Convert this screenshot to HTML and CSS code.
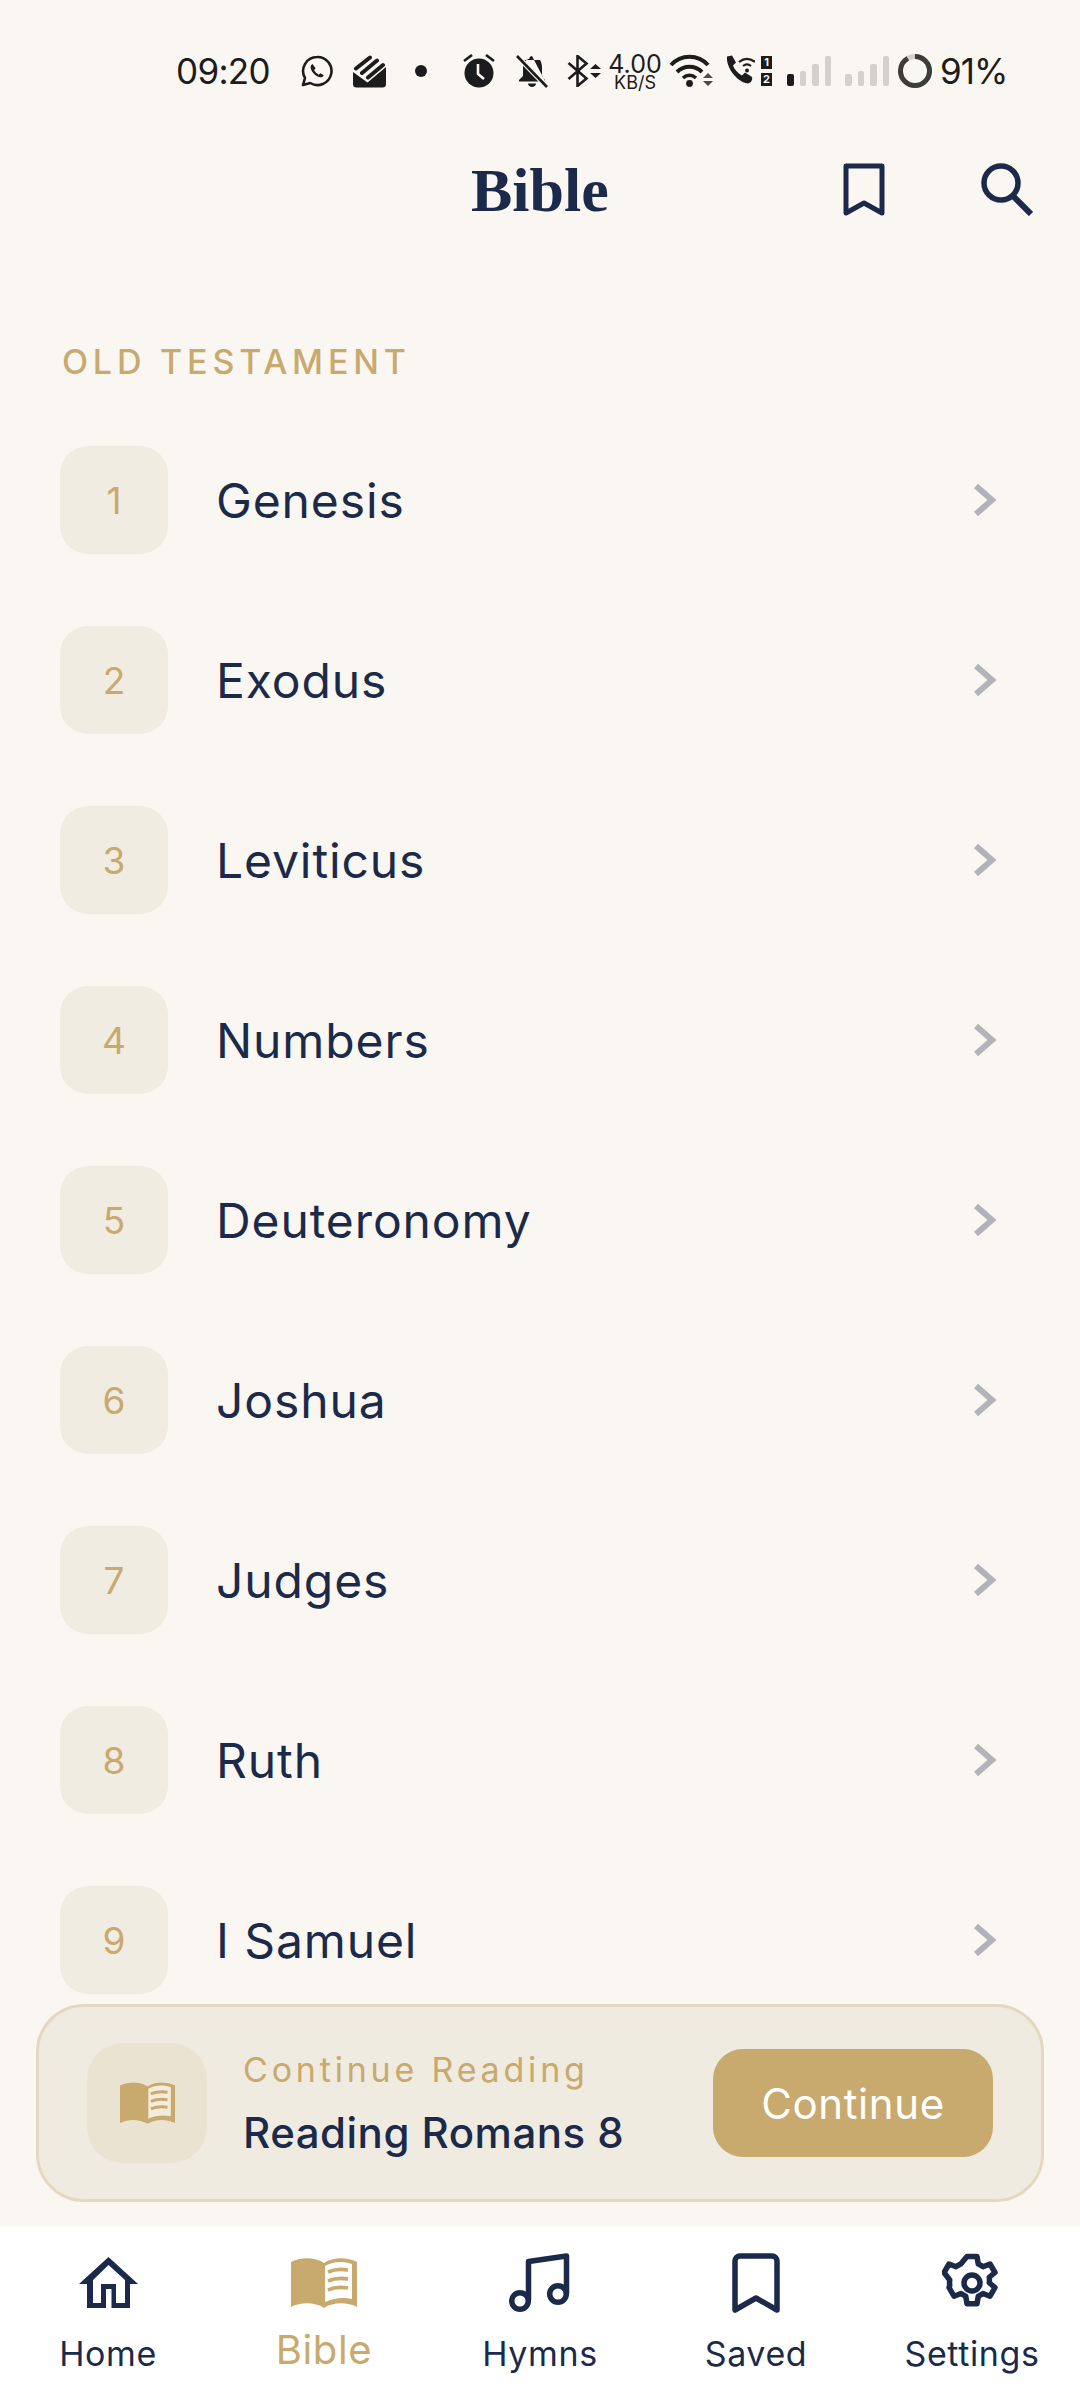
FILE: index.html
```html
<!DOCTYPE html>
<html lang="en">
<head>
    <meta charset="UTF-8">
    <meta name="viewport" content="width=device-width, initial-scale=1.0">
    <title>Bible</title>
    <link rel="stylesheet" href="styles.css">
</head>
<body>
    <div class="app">
        <!-- Status bar -->
        <div class="status-bar">
            <span class="status-time">09:20</span>
            <svg class="st st-whatsapp" viewBox="0 0 32 32"><path d="M16 2a14 14 0 0 0-12 21L2 30l7.300-2A14 14 0 1 0 16 2z" fill="none" stroke="#1c1c1c" stroke-width="2.600" stroke-linejoin="round"/><path d="M11.500 9c-1.500.8-2.300 2.500-1.700 4.600 1.100 3.800 4.400 7.200 8.300 8.500 2.200.7 4-.2 4.700-1.800l-3.300-2.100-1.700 1.500c-2-.9-3.800-2.700-4.700-4.700l1.500-1.700z" fill="#1c1c1c"/></svg>
            <svg class="st st-stack" viewBox="0 0 33 33"><path d="M0 17L14.500 27.500 33 12V29a3.500 3.500 0 0 1-3.500 3.500H3.500A3.500 3.500 0 0 1 0 29z" fill="#1c1c1c"/><path d="M3 13.500L17 2.500M9 18L24 5.500M15 22.500L30 10" fill="none" stroke="#1c1c1c" stroke-width="4" stroke-linecap="round"/></svg>
            <span class="st-dot"></span>
            <svg class="st st-alarm" viewBox="0 0 32 34"><circle cx="16" cy="19" r="14.500" fill="#1c1c1c"/><path d="M15 10v10l6 5" fill="none" stroke="#faf7f2" stroke-width="2.600"/><path d="M1 7l8-6M31 7l-8-6" stroke="#1c1c1c" stroke-width="2.600"/></svg>
            <svg class="st st-bell" viewBox="0 0 32 33"><path d="M16 1c-1.500 0-2.500 1-2.500 2.500C9 5 7 8.500 7 13v8l-4 4v1.500h22L8 5h16c1.500 2 2 5 2 8v8l3 4v1z" fill="#1c1c1c"/><path d="M12 28.500h8c0 2-2 3.500-4 3.500s-4-1.500-4-3.500z" fill="#1c1c1c"/><path d="M1 1l30 31" stroke="#faf7f2" stroke-width="5"/><path d="M1 1l30 31" stroke="#1c1c1c" stroke-width="2.600"/></svg>
            <svg class="st st-bt" viewBox="0 0 34 32"><path d="M1.500 8l18 15.500L10.500 31V1l9 7.500L1.500 24" fill="none" stroke="#1c1c1c" stroke-width="2.600"/><path d="M23 14l5.500-5 5.500 5zM23 18l5.500 5 5.500-5z" fill="#1c1c1c"/></svg>
            <div class="st-speed">
                <span class="speed-num">4.00</span>
                <span class="speed-unit">KB/S</span>
            </div>
            <svg class="st st-wifi" viewBox="0 0 44 34"><path d="M2 12c10-11 27-11 37 0" fill="none" stroke="#1c1c1c" stroke-width="4"/><path d="M8 19c7-7 18-7 25 0" fill="none" stroke="#1c1c1c" stroke-width="4"/><path d="M14 25c4-3.500 9-3.500 13 0" fill="none" stroke="#1c1c1c" stroke-width="3.600"/><circle cx="20.500" cy="30.500" r="3.400" fill="#1c1c1c"/><path d="M34 25l5-5 5 5zM34 28l5 5 5-5z" fill="#4a4a4a"/></svg>
            <svg class="st st-call" viewBox="0 0 30 30"><path d="M2 1.500l5 -1 4 7-3 3c1.500 4 4.500 7.500 9 10l3-3 7 4.500c.7 2.500-.5 5.500-4 6.500C12 27 1 13 2 1.500z" fill="#1c1c1c"/><path d="M14 7c5-4 11-4 16 0M18 11c2.500-2 5.500-2 8 0" fill="none" stroke="#1c1c1c" stroke-width="2.200"/><circle cx="22" cy="15.500" r="2" fill="#1c1c1c"/></svg>
            <div class="st-sims">
                <span class="sim">1</span>
                <span class="sim">2</span>
            </div>
            <div class="signal signal-first">
                <i class="bar bar-1 bar-on"></i><i class="bar bar-2"></i><i class="bar bar-3"></i><i class="bar bar-4"></i>
            </div>
            <div class="signal signal-second">
                <i class="bar bar-1"></i><i class="bar bar-2"></i><i class="bar bar-3"></i><i class="bar bar-4"></i>
            </div>
            <svg class="st st-battery" viewBox="0 0 34 34"><circle cx="17" cy="17" r="14.500" fill="none" stroke="#d3d1cc" stroke-width="5"/><circle cx="17" cy="17" r="14.500" fill="none" stroke="#3c3c3a" stroke-width="5" stroke-dasharray="83 91.100" transform="rotate(-90 17 17)"/></svg>
            <span class="status-pct">91%</span>
        </div>

        <!-- Header -->
        <div class="header">
            <h1>Bible</h1>
            <svg class="head-bookmark" viewBox="0 0 42 55"><path d="M3 3h36v47L21 40 3 50z" fill="none" stroke="#1b2a4a" stroke-width="5" stroke-linejoin="round"/></svg>
            <svg class="head-search" viewBox="0 0 52 53"><circle cx="20" cy="20" r="17" fill="none" stroke="#1b2a4a" stroke-width="5.500"/><path d="M32 33l18 18" stroke="#1b2a4a" stroke-width="6"/></svg>
        </div>

        <div class="section-title">OLD TESTAMENT</div>

        <div id="book-list" class="book-list"></div>

        <!-- Continue reading card -->
        <div class="continue-card">
            <div class="continue-icon">
                <svg class="book-small" viewBox="0 0 66 50"><use href="#book"/></svg>
            </div>
            <div class="continue-text">
                <div class="continue-label">Continue Reading</div>
                <div class="continue-title">Reading Romans 8</div>
            </div>
            <button class="continue-btn">Continue</button>
        </div>

        <!-- Bottom nav -->
        <div class="bottom-nav">
            <div class="nav-item">
                <div class="nav-icon"><svg class="ic-home" viewBox="0 0 59 52"><path d="M29.500 0L59 27H51V51H8V27H0zM29.500 8L14 23V46H22V27H37V46H46V23zM27 32H32.500V51H27z" fill="#1b2a4a" fill-rule="evenodd"/></svg></div>
                <span class="nav-label">Home</span>
            </div>
            <div class="nav-item active">
                <div class="nav-icon"><svg class="ic-book" viewBox="0 0 66 50"><use href="#book"/></svg></div>
                <span class="nav-label">Bible</span>
            </div>
            <div class="nav-item">
                <div class="nav-icon"><svg class="ic-music" viewBox="0 0 62 60"><path d="M19.500 47V8.500L57.500 3V41" fill="none" stroke="#1b2a4a" stroke-width="5.500" stroke-linejoin="round"/><circle cx="11" cy="48" r="8.300" fill="none" stroke="#1b2a4a" stroke-width="5.500"/><circle cx="49" cy="41" r="8.300" fill="none" stroke="#1b2a4a" stroke-width="5.500"/></svg></div>
                <span class="nav-label">Hymns</span>
            </div>
            <div class="nav-item">
                <div class="nav-icon"><svg class="ic-saved" viewBox="0 0 48 60"><path d="M8 3h32a5 5 0 0 1 5 5v49L24 45 3 57V8a5 5 0 0 1 5-5z" fill="none" stroke="#1b2a4a" stroke-width="5.500" stroke-linejoin="round"/></svg></div>
                <span class="nav-label">Saved</span>
            </div>
            <div class="nav-item">
                <div class="nav-icon"><svg class="ic-gear" viewBox="0 0 24 24"><circle cx="12" cy="12" r="3.200" fill="none" stroke="#1b2a4a" stroke-width="2.200"/><path d="M10 1.400h4l.5 3c.7.300 1.300.600 1.900 1.100l2.800-1.100 2 3.400-2.300 1.900c.1.700.1 1.500 0 2.200l2.300 1.900-2 3.500-2.800-1.100c-.6.400-1.200.800-1.900 1.100l-.5 3h-4l-.5-3c-.7-.3-1.300-.7-1.900-1.100l-2.800 1.100-2-3.500L3.100 13c-.1-.7-.1-1.500 0-2.200L.8 7.800l2-3.400 2.800 1.100c.6-.5 1.200-.8 1.900-1.100z" fill="none" stroke="#1b2a4a" stroke-width="2.200" stroke-linejoin="round"/></svg></div>
                <span class="nav-label">Settings</span>
            </div>
        </div>
    </div>

    <!-- shared open book shape -->
    <svg class="defs" width="0" height="0">
        <symbol id="book" viewBox="0 0 66 50">
            <path d="M0 4C10 -1 24 -1 33 5C42 -1 56 -1 66 4V49C56 44 42 44 33 50C24 44 10 44 0 49z" fill="#c8a96e"/>
            <path d="M34 8C42 3 53 3 61 6V41C52 39 43 40 34 44z" fill="currentColor"/>
            <path d="M37 14C44 11 51 11 57 12M37 23C44 20 51 20 57 21M37 32C44 29 51 29 57 30" fill="none" stroke="#c8a96e" stroke-width="3.600"/>
        </symbol>
    </svg>

    <script>
        const books = ["Genesis", "Exodus", "Leviticus", "Numbers", "Deuteronomy", "Joshua", "Judges", "Ruth", "I Samuel"];
        const list = document.getElementById("book-list");

        books.forEach((name, i) => {
            const row = document.createElement("div");
            row.className = "book-row";
            row.innerHTML = `
                <div class="book-num">${i + 1}</div>
                <div class="book-name">${name}</div>
                <svg class="chevron" viewBox="0 0 26 36"><path d="M4 4l16 14L4 32" fill="none" stroke="#b2b3b9" stroke-width="6"/></svg>
            `;
            list.appendChild(row);
        });
    </script>
</body>
</html>
```

FILE: styles.css
```css
* {
    box-sizing: border-box;
}

body {
    margin: 0;
    font-family: Inter, "Noto Sans", sans-serif;
    background-color: #faf7f2;
    color: #1b2a4a;
}

.app {
    width: 1080px;
    height: 2400px;
    display: flex;
    flex-direction: column;
    overflow: hidden;
}

.defs {
    display: block;
}

/* status bar */
.status-bar {
    height: 142px;
    padding: 52px 0 0 176px;
    display: flex;
    align-items: flex-start;
    color: #1c1c1c;
}

.st {
    display: block;
    flex-shrink: 0;
}

.status-time {
    width: 94px;
    font-size: 35px;
    line-height: 38px;
    letter-spacing: -0.700px;
}

.status-pct {
    margin-left: 8px;
    font-size: 35px;
    line-height: 38px;
    letter-spacing: -1px;
}

.st-whatsapp { width: 32px; height: 32px; margin: 3px 0 0 31px; }
.st-stack { width: 33px; height: 33px; margin: 3px 0 0 20px; }
.st-dot { width: 12px; height: 12px; margin: 13px 0 0 29px; border-radius: 50%; background: #1c1c1c; }
.st-alarm { width: 32px; height: 34px; margin: 2px 0 0 36px; }
.st-bell { width: 32px; height: 33px; margin: 3px 0 0 21px; }
.st-bt { width: 34px; height: 32px; margin: 3px 0 0 19px; }
.st-speed { width: 52px; margin: 2px 0 0 8px; display: flex; flex-direction: column; align-items: center; }
.speed-num { font-size: 25px; line-height: 20px; }
.speed-unit { font-size: 18px; line-height: 18px; }
.st-wifi { width: 44px; height: 34px; margin: 1px 0 0 8px; }
.st-call { width: 30px; height: 30px; margin: 3px 0 0 12px; }
.st-sims { width: 11px; margin: 4px 0 0 6px; display: flex; flex-direction: column; gap: 4px; }

.sim {
    height: 13px;
    background: #1c1c1c;
    color: #faf7f2;
    font-size: 11px;
    line-height: 13px;
    font-weight: 700;
    text-align: center;
}

.signal {
    height: 34px;
    display: flex;
    align-items: flex-end;
    gap: 6px;
}

.signal-first { margin-left: 15px; }
.signal-second { margin-left: 14px; }

.bar {
    display: block;
    width: 6.500px;
    border-radius: 2px;
    background: #d3d1cc;
}

.bar-on { background: #1c1c1c; }
.bar-1 { height: 12px; }
.bar-2 { height: 15px; }
.bar-3 { height: 22px; }
.bar-4 { height: 30px; }

.st-battery { width: 34px; height: 34px; margin: 2px 0 0 9px; }

/* header */
.header {
    height: 120px;
    padding-right: 47px;
    display: flex;
    align-items: flex-start;
}

.header h1 {
    margin: 12px 0 0 471px;
    width: 372px;
    font-family: "Liberation Serif", serif;
    font-size: 62px;
    line-height: 72px;
    font-weight: 700;
}

.head-bookmark {
    width: 42px;
    height: 55px;
    margin-top: 21px;
}

.head-search {
    width: 52px;
    height: 53px;
    margin: 21px 0 0 96px;
}

.section-title {
    margin: 79px 0 0 62px;
    font-size: 34px;
    font-weight: 500;
    line-height: 42px;
    letter-spacing: 4.800px;
    color: #c8a96e;
}

/* book rows */
.book-list {
    flex: 1;
    min-height: 0;
    margin-top: 63px;
    padding: 0 60px;
    overflow: hidden;
}

.book-row {
    height: 108px;
    margin-bottom: 72px;
    display: flex;
    align-items: center;
}

.book-num {
    width: 108px;
    height: 108px;
    border-radius: 28px;
    background-color: #f0ece2;
    color: #c8a96e;
    font-size: 37px;
    display: flex;
    align-items: center;
    justify-content: center;
}

.book-name {
    flex: 1;
    margin-left: 48px;
    font-size: 48px;
    font-weight: 375;
    letter-spacing: 0.900px;
}

.chevron {
    width: 26px;
    height: 36px;
    margin-right: 22px;
}

/* continue card */
.continue-card {
    height: 198px;
    margin: 0 36px 24px;
    padding: 0 48px;
    display: flex;
    align-items: center;
    background-color: #efebe0;
    border: 3px solid #e4d9bf;
    border-radius: 48px;
}

.continue-icon {
    width: 120px;
    height: 120px;
    border-radius: 36px;
    background-color: #ebe3d2;
    color: #f3ecdc;
    display: flex;
    align-items: center;
    justify-content: center;
}

.book-small {
    width: 55px;
    height: 42px;
}

.continue-text {
    flex: 1;
    margin-left: 36px;
}

.continue-label {
    font-size: 34px;
    line-height: 42px;
    letter-spacing: 3.800px;
    color: #c8a96e;
}

.continue-title {
    margin-top: 18px;
    font-size: 42px;
    line-height: 48px;
    font-weight: 500;
    letter-spacing: 0.500px;
}

.continue-btn {
    width: 280px;
    height: 108px;
    border: none;
    border-radius: 30px;
    background-color: #c8a96e;
    color: white;
    font-family: Inter, sans-serif;
    font-size: 42px;
    font-weight: 400;
    letter-spacing: 0.600px;
}

/* bottom nav */
.bottom-nav {
    height: 174px;
    background-color: white;
    color: #1b2a4a;
    display: flex;
}

.nav-item {
    width: 216px;
    padding-top: 26px;
    display: flex;
    flex-direction: column;
    align-items: center;
}

.nav-icon {
    height: 62px;
    display: flex;
    align-items: center;
}

.nav-label {
    margin-top: 20px;
    font-size: 34px;
    line-height: 40px;
    letter-spacing: 0.600px;
}

.nav-item.active .nav-icon {
    color: white;
}

.nav-item.active .nav-label {
    margin-top: 12px;
    font-size: 40px;
    line-height: 48px;
    color: #c8a96e;
}

.ic-home { width: 59px; height: 52px; }
.ic-book { width: 66px; height: 50px; }
.ic-music { width: 62px; height: 60px; }
.ic-saved { width: 48px; height: 60px; }
.ic-gear { width: 60px; height: 60px; }
```
